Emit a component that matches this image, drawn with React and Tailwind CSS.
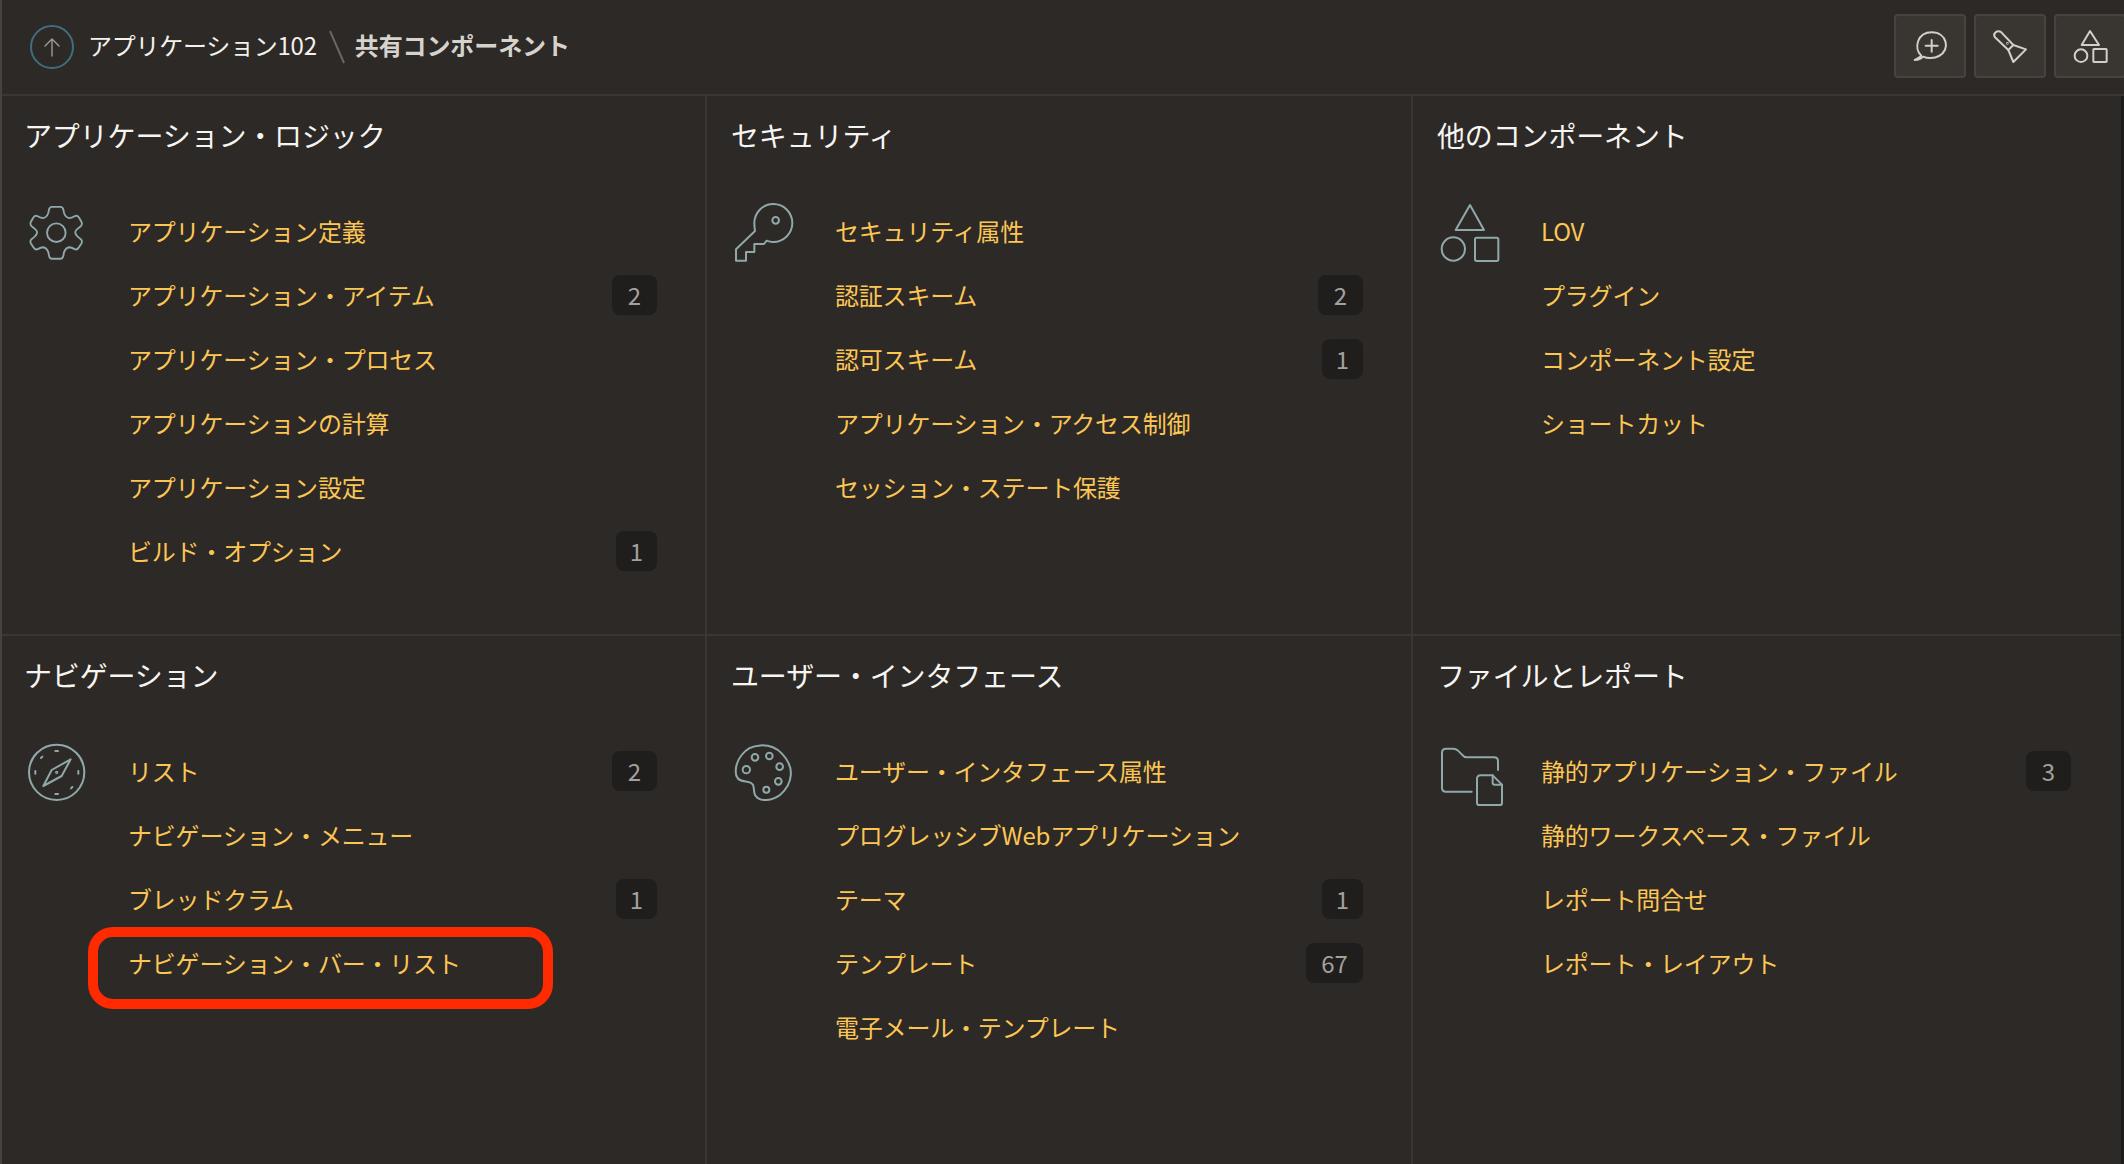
import React from "react";

const FONT = "font-['Noto_Sans_CJK_JP','Noto_Sans',sans-serif]";

const Line = ({ viewBox, children, className = "w-[66px] h-[66px] text-[#8fa9aa]", sw = 6 }) => (
  <svg viewBox={viewBox} className={className} fill="none" stroke="currentColor" strokeWidth={sw} strokeLinecap="round" strokeLinejoin="round">
    {children}
  </svg>
);

const GearIcon = () => (
  <Line viewBox="12 15 198 198">
    <g transform="translate(109 113) scale(0.93) translate(-109 -113)">
      <path d="M95 30 H122 Q130 30 132 40 Q134 62 150 66 Q158 66 168 60 Q176 56 182 64 L190 78 Q194 86 188 92 Q170 104 170 112 Q170 122 188 134 Q194 140 190 148 L182 160 Q176 170 168 166 Q158 160 150 160 Q134 164 132 186 Q130 197 122 197 H95 Q87 197 85 186 Q83 164 67 160 Q59 160 49 166 Q41 170 35 160 L27 148 Q23 140 29 134 Q47 122 47 112 Q47 104 29 92 Q23 86 27 78 L35 64 Q41 56 49 60 Q59 66 67 66 Q83 62 85 40 Q87 30 95 30 Z" />
      <circle cx="109" cy="113" r="30" />
    </g>
  </Line>
);

const KeyIcon = () => (
  <Line viewBox="93 60 198 198">
    <path d="M165 153 L108 208 V242 H138 V216 H163 V192 H192 L200 182 Q210 186 218 186 A57 57 0 1 0 163 130 Q163 142 165 153 Z" />
    <circle cx="227" cy="121" r="10" />
  </Line>
);

const ShapesIcon = () => (
  <Line viewBox="51 60 198 198">
    <path d="M150 75 L192 150 H107 Z" />
    <circle cx="100" cy="207" r="35" />
    <rect x="165" y="173" width="70" height="70" rx="5" />
  </Line>
);

const CompassIcon = () => (
  <Line viewBox="72 60 198 198">
    <circle cx="170" cy="157" r="83" />
    <path d="M212 118 L155 150 L130 198 L185 168 Z" />
    <circle cx="170" cy="157" r="2" />
    <path d="M166 93 H174 M166 222 H174 M106 153 V161 M235 153 V161 M123 114 L127 110 M213 205 L217 201" />
  </Line>
);

const PaletteIcon = () => (
  <Line viewBox="63 60 198 198">
    <path d="M90 180 C70 170 75 130 95 105 C120 70 180 65 215 100 C255 140 250 190 210 225 C190 240 150 250 135 225 C128 210 138 190 115 186 C105 184 98 184 90 180 Z" />
    <circle cx="135" cy="112" r="10" />
    <circle cx="178" cy="108" r="10" />
    <circle cx="209" cy="140" r="10" />
    <circle cx="205" cy="184" r="10" />
    <circle cx="169" cy="209" r="9" />
    <circle cx="109" cy="149" r="11" />
  </Line>
);

const FolderIcon = () => (
  <Line viewBox="51 60 198 198">
    <path d="M155 215 H78 Q66 215 66 203 V98 Q66 86 78 86 H100 Q108 86 114 92 L126 104 Q132 112 140 112 H222 Q234 112 234 124 V150" />
    <path d="M182 166 H218 L246 194 V248 Q246 255 240 255 H178 Q171 255 171 248 V177 Q171 166 182 166 Z" />
    <path d="M218 166 V188 Q218 194 224 194 H246" />
  </Line>
);

const headerIconClass = "w-[72px] h-[64px] text-[#d2cfc9]";

const tools = [
  <Line key="chat" viewBox="210 42 216 192" className={headerIconClass}>
    <path d="M292 167 C268 145 280 97 323 97 C370 97 380 150 345 168 C330 176 310 176 298 170 C290 178 282 180 272 180 C280 175 288 172 292 167 Z" />
    <path d="M323 120 V155 M305 137 H341" />
  </Line>,
  <Line key="torch" viewBox="450 42 216 192" className={headerIconClass}>
    <path d="M513 112 Q507 104 515 97 Q523 90 532 97 L568 135 L606 148 L568 186 L553 150 Z" />
    <path d="M568 135 L553 150" />
    <circle cx="550" cy="130" r="1" />
  </Line>,
  <Line key="shapes" viewBox="690 42 216 192" className={headerIconClass}>
    <path d="M798 93 L825 135 H773 Z" />
    <circle cx="771" cy="167" r="19" />
    <rect x="808" y="147" width="40" height="39" rx="2" />
  </Line>,
];

const sections = [
  {
    title: "アプリケーション・ロジック",
    icon: <GearIcon />,
    pad: "pl-[22px] pr-[48px]",
    items: [
      ["アプリケーション定義"],
      ["アプリケーション・アイテム", "2"],
      ["アプリケーション・プロセス"],
      ["アプリケーションの計算"],
      ["アプリケーション設定"],
      ["ビルド・オプション", "1"],
    ],
  },
  {
    title: "セキュリティ",
    icon: <KeyIcon />,
    pad: "pl-[24px] pr-[48px]",
    items: [
      ["セキュリティ属性"],
      ["認証スキーム", "2"],
      ["認可スキーム", "1"],
      ["アプリケーション・アクセス制御"],
      ["セッション・ステート保護"],
    ],
  },
  {
    title: "他のコンポーネント",
    icon: <ShapesIcon />,
    pad: "pl-[24px] pr-[50px]",
    items: [["LOV"], ["プラグイン"], ["コンポーネント設定"], ["ショートカット"]],
  },
  {
    title: "ナビゲーション",
    icon: <CompassIcon />,
    pad: "pl-[22px] pr-[48px]",
    items: [
      ["リスト", "2"],
      ["ナビゲーション・メニュー"],
      ["ブレッドクラム", "1"],
      ["ナビゲーション・バー・リスト", null, true],
    ],
  },
  {
    title: "ユーザー・インタフェース",
    icon: <PaletteIcon />,
    pad: "pl-[24px] pr-[48px]",
    items: [
      ["ユーザー・インタフェース属性"],
      ["プログレッシブWebアプリケーション"],
      ["テーマ", "1"],
      ["テンプレート", "67"],
      ["電子メール・テンプレート"],
    ],
  },
  {
    title: "ファイルとレポート",
    icon: <FolderIcon />,
    pad: "pl-[24px] pr-[50px]",
    items: [
      ["静的アプリケーション・ファイル", "3"],
      ["静的ワークスペース・ファイル"],
      ["レポート問合せ"],
      ["レポート・レイアウト"],
    ],
  },
];

const badgeWidth = { 1: "w-[41px]", 2: "w-[45px]", 3: "w-[45px]", 67: "w-[57px]" };

const Badge = ({ value }) => (
  <span className={`${badgeWidth[value]} h-[40px] flex items-center justify-center rounded-lg bg-[#1f1e1c] text-[24px] leading-none text-[#a3a19d]`}>
    {value}
  </span>
);

const Section = ({ section, tall }) => (
  <section className={`${tall ? "h-[538px]" : "h-[529px]"} ${section.pad} pt-[20px]`}>
    <h2 className="h-[38px] text-[28px] leading-[38px] tracking-[-0.15px] text-[#f7f5f2] whitespace-nowrap">{section.title}</h2>
    <div className="mt-[45px] flex">
      <div className="w-[104px] shrink-0 pt-[1px]">{section.icon}</div>
      <ul className="flex-1">
        {section.items.map(([label, count, marked]) => (
          <li key={label} className="relative h-[64px] flex items-center justify-between">
            <span className="text-[24px] tracking-[-0.2px] text-[#fcc655] whitespace-nowrap">{label}</span>
            {count && <Badge value={count} />}
            {marked && (
              <span className="absolute left-[-40px] top-[-4px] w-[465px] h-[82px] rounded-[25px] border-[10px] border-[#ff2a00]" />
            )}
          </li>
        ))}
      </ul>
    </div>
  </section>
);

export default function App() {
  return (
    <div className={`${FONT} w-[2124px] h-[1164px] overflow-hidden bg-[#2d2926] border-l-2 border-[#46423e]`}>
      <header className="h-[96px] flex items-center justify-between border-b-2 border-[#3a3632] pl-[28px]">
        <div className="flex items-center">
          <span className="w-[44px] h-[44px] rounded-full border-2 border-[#3f6e7f] flex items-center justify-center text-[#a09a94]">
            <svg viewBox="0 0 24 24" className="w-[24px] h-[24px]" fill="none" stroke="currentColor" strokeWidth="1.4" strokeLinecap="round">
              <path d="M12 21 V4 M5 11 L12 4 L19 11" />
            </svg>
          </span>
          <span className="ml-[14px] mb-[5px] text-[24px] tracking-[-0.25px] text-[#f3f1ed]">アプリケーション102</span>
          <svg viewBox="0 0 16 34" className="ml-[12px] w-[16px] h-[34px] text-[#6b665f]" fill="none" stroke="currentColor" strokeWidth="2">
            <path d="M1 1 L15 33" />
          </svg>
          <span className="ml-[10px] mb-[5px] text-[24px] font-bold tracking-[-0.1px] text-[#d6d3ce]">共有コンポーネント</span>
        </div>
        <div className="flex gap-[8px] mr-[-2px] mb-[2px]">
          {tools.map((icon) => (
            <button key={icon.key} className="w-[72px] h-[64px] shrink-0 rounded-[4px] border-2 border-[#474440] bg-[#393632] flex items-center justify-center overflow-hidden">
              <span className="block shrink-0">{icon}</span>
            </button>
          ))}
        </div>
      </header>
      <div className="grid grid-cols-[705px_706px_708px] border-r-[3px] border-[#1d1c1a]">
        {sections.map((section, i) => (
          <div key={section.title} className={`${i % 3 !== 2 ? "border-r-2 border-[#3a3632]" : ""} ${i < 3 ? "border-b-2 border-[#3a3632]" : ""}`}>
            <Section section={section} tall={i < 3} />
          </div>
        ))}
      </div>
    </div>
  );
}
